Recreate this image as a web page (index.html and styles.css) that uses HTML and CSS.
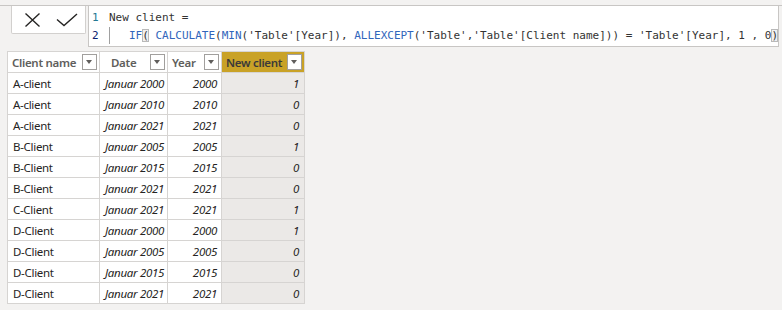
FILE: index.html
```html
<!DOCTYPE html>
<html lang="en">
<head>
  <meta charset="UTF-8">
  <title>New client</title>
  <link rel="stylesheet" href="styles.css">
</head>
<body>
  <div class="formula-bar">
    <div class="commit-buttons">
      <svg class="icon" width="17" height="16" viewBox="0 0 17 16" aria-label="Cancel">
        <path d="M1.5 1.5 L15.5 14.5 M15.5 1.5 L1.5 14.5" stroke="#252423" stroke-width="1.4" fill="none"/>
      </svg>
      <svg class="icon" width="22" height="14" viewBox="0 0 22 14" aria-label="Commit">
        <path d="M1 6.5 L8 12.5 L21 1" stroke="#252423" stroke-width="1.4" fill="none"/>
      </svg>
    </div>
    <div class="editor">
      <div class="code-line">
        <span class="line-no">1</span>
        <span class="code">New client =</span>
      </div>
      <div class="code-line">
        <span class="line-no active">2</span>
        <span class="code"><span class="indent"></span><span class="fn">IF</span><span class="match">(</span> <span class="fn">CALCULATE</span>(<span class="fn">MIN</span>('Table'[Year]), <span class="fn">ALLEXCEPT</span>('Table','Table'[Client name])) = 'Table'[Year], 1 , 0<span class="match">)</span></span>
      </div>
    </div>
  </div>

  <div class="table-wrap">
    <table class="data-table">
      <thead>
        <tr>
          <th class="col-name"><div class="head"><span>Client name</span><span class="drop"></span></div></th>
          <th class="col-date"><div class="head head-date"><span>Date</span><span class="drop"></span></div></th>
          <th class="col-year"><div class="head"><span>Year</span><span class="drop"></span></div></th>
          <th class="col-new selected"><div class="head"><span>New client</span><span class="drop"></span></div></th>
        </tr>
      </thead>
      <tbody>
        <tr><td>A-client</td><td class="num">Januar 2000</td><td class="num">2000</td><td class="num sel">1</td></tr>
        <tr><td>A-client</td><td class="num">Januar 2010</td><td class="num">2010</td><td class="num sel">0</td></tr>
        <tr><td>A-client</td><td class="num">Januar 2021</td><td class="num">2021</td><td class="num sel">0</td></tr>
        <tr><td>B-Client</td><td class="num">Januar 2005</td><td class="num">2005</td><td class="num sel">1</td></tr>
        <tr><td>B-Client</td><td class="num">Januar 2015</td><td class="num">2015</td><td class="num sel">0</td></tr>
        <tr><td>B-Client</td><td class="num">Januar 2021</td><td class="num">2021</td><td class="num sel">0</td></tr>
        <tr><td>C-Client</td><td class="num">Januar 2021</td><td class="num">2021</td><td class="num sel">1</td></tr>
        <tr><td>D-Client</td><td class="num">Januar 2000</td><td class="num">2000</td><td class="num sel">1</td></tr>
        <tr><td>D-Client</td><td class="num">Januar 2005</td><td class="num">2005</td><td class="num sel">0</td></tr>
        <tr><td>D-Client</td><td class="num">Januar 2015</td><td class="num">2015</td><td class="num sel">0</td></tr>
        <tr><td>D-Client</td><td class="num">Januar 2021</td><td class="num">2021</td><td class="num sel">0</td></tr>
      </tbody>
    </table>
  </div>
</body>
</html>
```

FILE: styles.css
```css
/* General */
body {
  margin: 0;
  background: #f3f2f1;
  font-family: 'Noto Sans', 'Open Sans', sans-serif;
  font-size: 11px;
  color: #252423;
}

/* Formula bar */
.formula-bar {
  display: flex;
  align-items: flex-start;
  margin-top: 5px;
  border-top: 1px solid #c8c6c4;
  height: 41px;
}

.commit-buttons {
  display: flex;
  align-items: center;
  gap: 15px;
  box-sizing: border-box;
  width: 76px;
  height: 28px;
  margin-left: 11px;
  padding-left: 12px;
  background: #fff;
  border: 1px solid #d2d0ce;
  border-top: none;
  border-radius: 0 0 2px 2px;
}

.commit-buttons .icon {
  display: block;
}

.editor {
  flex: 1;
  box-sizing: border-box;
  height: 41px;
  margin-left: 2px;
  margin-right: 3px;
  padding-top: 3px;
  background: #fff;
  border-left: 1px solid #c8c6c4;
  border-right: 1px solid #c8c6c4;
  border-bottom: 1px solid #c8c6c4;
  font-family: 'DejaVu Sans Mono', 'Liberation Mono', monospace;
  font-size: 11px;
  color: #333;
}

.code-line {
  display: flex;
  height: 18px;
  line-height: 18px;
  white-space: pre;
}

.line-no {
  width: 17px;
  padding-left: 3px;
  color: #237893;
}

.line-no.active {
  color: #0b216f;
}

.indent {
  display: inline-block;
  width: 20px;
  height: 17px;
  vertical-align: top;
  box-sizing: border-box;
  border-left: 1px solid #a0a0a0;
}

.fn {
  color: #3165bb;
}

.match {
  outline: 1px solid #b9b9b9;
  outline-offset: -1px;
  background: #f0f0f0;
}

/* Table */
.table-wrap {
  padding: 4px 0 0 7px;
}

.data-table {
  border-collapse: collapse;
  table-layout: fixed;
  width: 297px;
  letter-spacing: -0.3px;
}

.data-table th,
.data-table td {
  box-sizing: border-box;
  height: 21px;
  padding: 0 5px;
  border: 1px solid #d6d4d2;
  white-space: nowrap;
  overflow: hidden;
}

.data-table th {
  padding: 0 2px 0 4px;
  background: #fff;
  font-size: 11.5px;
  font-weight: 600;
  color: #605e5c;
  text-align: left;
}

.col-name { width: 92px; }
.col-date { width: 68px; }
.col-year { width: 54px; }
.col-new { width: 83px; }

.data-table th.selected {
  background: #c9a227;
  color: #3b3a39;
}

.head {
  display: flex;
  align-items: center;
  justify-content: space-between;
}

.head-date {
  padding-left: 7px;
}

.drop {
  position: relative;
  flex: none;
  box-sizing: border-box;
  width: 15px;
  height: 16px;
  background: #fff;
  border: 1px solid #a19f9d;
}

.drop::after {
  content: '';
  position: absolute;
  left: 3px;
  top: 5px;
  border-left: 3.5px solid transparent;
  border-right: 3.5px solid transparent;
  border-top: 4px solid #605e5c;
}

.data-table td {
  background: #fff;
  font-size: 11.5px;
}

.data-table td.num {
  text-align: right;
  font-style: italic;
  padding-right: 4px;
}

.data-table td.sel {
  background: #ebe9e7;
  padding-right: 5px;
}
```
